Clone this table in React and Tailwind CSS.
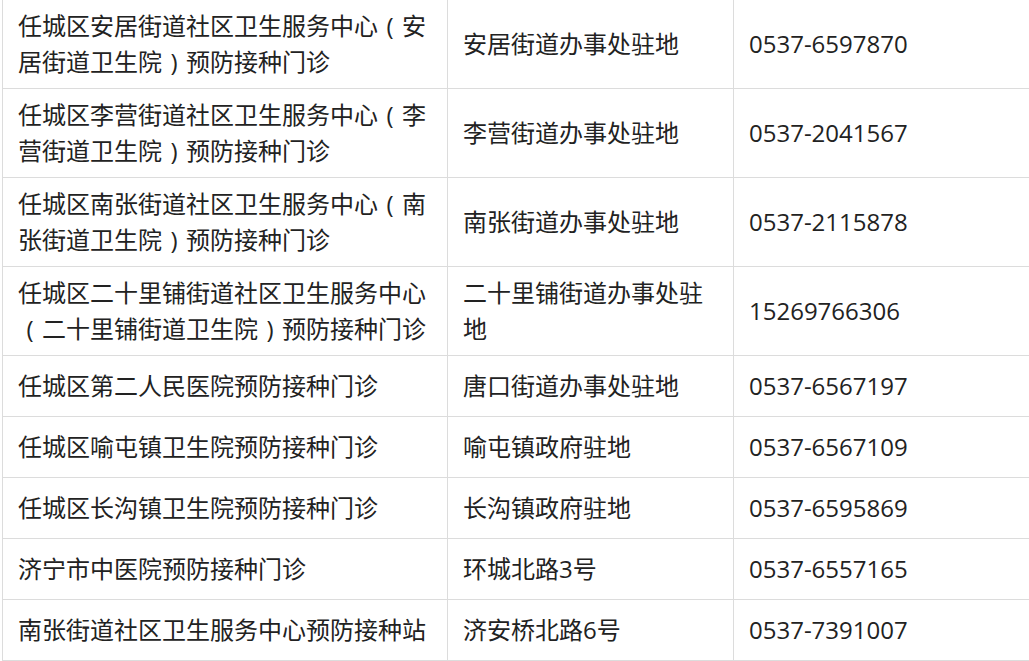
import React from "react";

const ROWS = [
  { name: "任城区安居街道社区卫生服务中心（安居街道卫生院）预防接种门诊", place: "安居街道办事处驻地", tel: "0537-6597870", h: 89 },
  { name: "任城区李营街道社区卫生服务中心（李营街道卫生院）预防接种门诊", place: "李营街道办事处驻地", tel: "0537-2041567", h: 89 },
  { name: "任城区南张街道社区卫生服务中心（南张街道卫生院）预防接种门诊", place: "南张街道办事处驻地", tel: "0537-2115878", h: 89 },
  { name: "任城区二十里铺街道社区卫生服务中心（二十里铺街道卫生院）预防接种门诊", place: "二十里铺街道办事处驻地", tel: "15269766306", h: 89 },
  { name: "任城区第二人民医院预防接种门诊", place: "唐口街道办事处驻地", tel: "0537-6567197", h: 61 },
  { name: "任城区喻屯镇卫生院预防接种门诊", place: "喻屯镇政府驻地", tel: "0537-6567109", h: 61 },
  { name: "任城区长沟镇卫生院预防接种门诊", place: "长沟镇政府驻地", tel: "0537-6595869", h: 61 },
  { name: "济宁市中医院预防接种门诊", place: "环城北路3号", tel: "0537-6557165", h: 61 },
  { name: "南张街道社区卫生服务中心预防接种站", place: "济安桥北路6号", tel: "0537-7391007", h: 61 },
];

// YaHei-style centred full-width brackets
function Text({ s }) {
  const parts = s.split(/([（）])/);
  return parts.map((p, i) =>
    p === "（" || p === "）" ? (
      <span key={i} className="inline-block w-[1em] text-center">
        {p === "（" ? "(" : ")"}
      </span>
    ) : (
      <React.Fragment key={i}>{p}</React.Fragment>
    )
  );
}

export default function App() {
  return (
    <div className="w-[1029px] h-[661px] overflow-hidden bg-white">
      <div
        className="ml-[2px] -mt-[1px] w-[1027px] text-[24px] leading-[36px] text-[#222]"
        style={{ fontFamily: '"Open Sans", "Noto Sans CJK SC", sans-serif' }}
      >
        <table className="w-full border-collapse table-fixed">
          <colgroup>
            <col className="w-[445px]" />
            <col className="w-[286px]" />
            <col className="w-[296px]" />
          </colgroup>
          <tbody>
            {ROWS.map((r, i) => (
              <tr key={i} style={{ height: r.h }}>
                <td className="border border-[#dcdcdc] px-[15px] align-middle break-all">
                  <Text s={r.name} />
                </td>
                <td className="border border-[#dcdcdc] px-[15px] align-middle break-all">{r.place}</td>
                <td className="border border-[#dcdcdc] px-[15px] align-middle">{r.tel}</td>
              </tr>
            ))}
          </tbody>
        </table>
      </div>
    </div>
  );
}
